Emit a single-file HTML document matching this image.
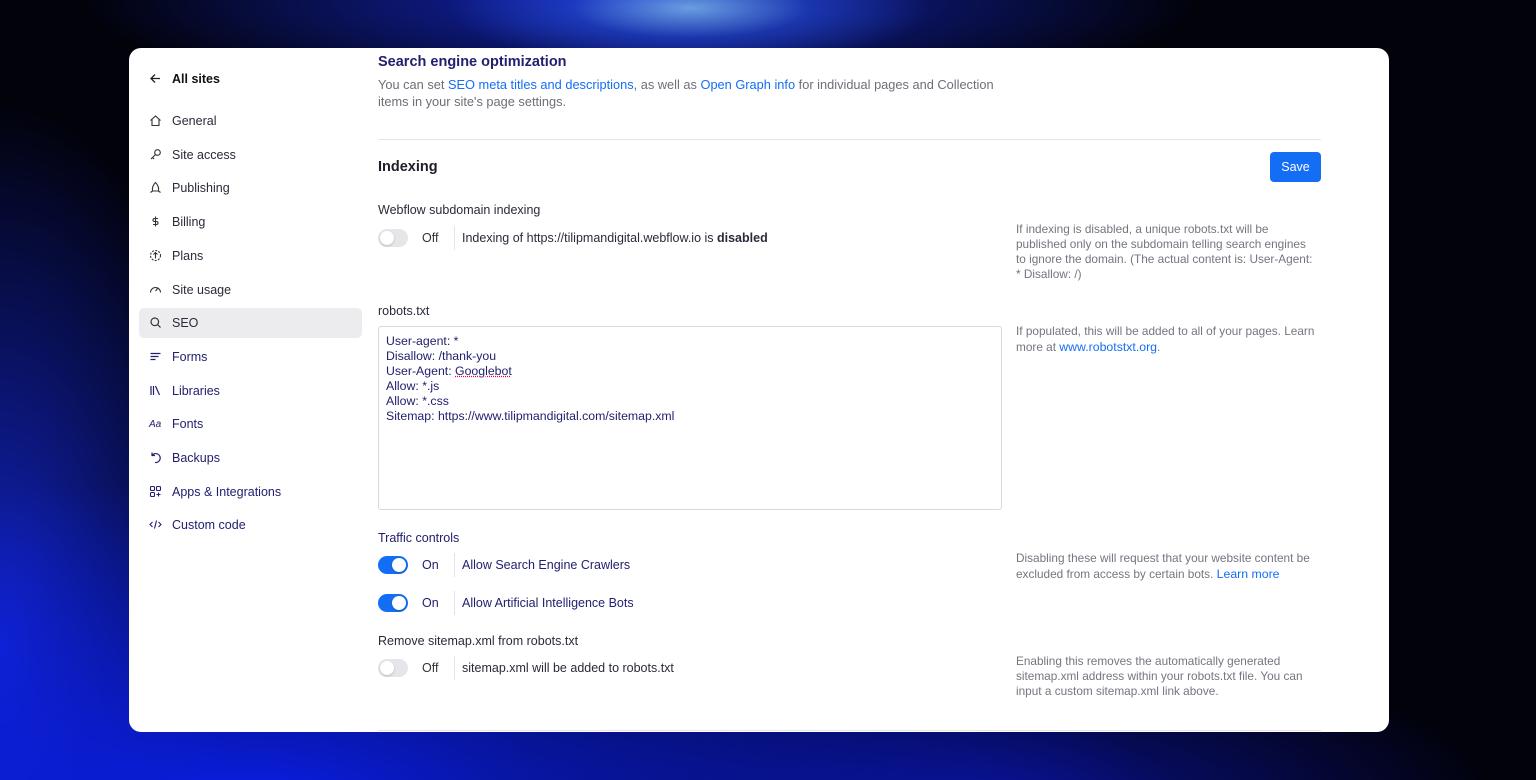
<!DOCTYPE html>
<html><head><meta charset="utf-8"><style>
*{margin:0;padding:0;box-sizing:border-box}
body{width:1536px;height:780px;overflow:hidden;font-family:"Liberation Sans",sans-serif;
background:
radial-gradient(ellipse 240px 60px at 690px 8px,rgba(120,180,235,.85),rgba(40,80,220,.5) 50%,transparent 100%),
radial-gradient(ellipse 560px 110px at 640px 0px,rgba(20,40,200,.9),transparent 100%),
radial-gradient(ellipse 900px 320px at 250px 800px,rgba(10,30,230,1),transparent 100%),
radial-gradient(ellipse 500px 160px at 1000px 800px,rgba(10,20,170,.8),transparent 100%),
radial-gradient(ellipse 250px 550px at 0px 650px,rgba(20,40,220,.9),transparent 100%),
#02020a;position:relative}
.card{position:absolute;left:129px;top:48px;width:1260px;height:684px;background:#fff;border-radius:12px;overflow:hidden}
.a{position:absolute;white-space:nowrap}
.nav{position:absolute;left:20px;font-size:12.5px;color:#2a2a3a;line-height:16px;white-space:nowrap;width:200px}
.nav svg{position:absolute;left:0;top:1px}
.nav span{position:absolute;left:23px;top:0}
.navy{color:#22206e}
.tg{position:absolute;width:30px;height:18px;border-radius:9px;background:#e6e6ea}
.tg::after{content:"";position:absolute;top:2px;left:2px;width:14px;height:14px;border-radius:50%;background:#fff;box-shadow:0 1px 2px rgba(0,0,0,.2)}
.tg.on{background:#146ef5}.tg.on::after{left:14px}
.dv{position:absolute;width:1px;height:24px;background:#e4e4e8}
.r{position:absolute;left:887px;font-size:11.8px;color:#757580;line-height:15px;width:302px}
.lk{color:#146ef5}
</style></head><body>
<div class="card">
<div class="nav" style="top:23px;font-weight:bold;color:#111"><svg width="13" height="13" viewBox="0 0 13 13" fill="none" stroke="#222" stroke-width="1.3"><path d="M11 6.5H2M6 2.5l-4 4 4 4"/></svg><span>All sites</span></div>
<div class="nav" style="top:65px"><svg width="13" height="13" viewBox="0 0 13 13" fill="none" stroke="#333" stroke-width="1.1"><path d="M1.5 6.5L6.5 2l5 4.5M3 5.5v6h7v-6"/></svg><span>General</span></div>
<div class="nav" style="top:99px"><svg width="13" height="13" viewBox="0 0 13 13" fill="none" stroke="#333" stroke-width="1.1"><circle cx="8.5" cy="4.5" r="2.8"/><path d="M6.5 6.5L2 11M3.5 9.5l1.5 1.5"/></svg><span>Site access</span></div>
<div class="nav" style="top:132px"><svg width="13" height="13" viewBox="0 0 13 13" fill="none" stroke="#333" stroke-width="1.1"><path d="M6.5 1.5C4 4 3 7 3.5 10h6C10 7 9 4 6.5 1.5zM3.5 10L1.5 11.5M9.5 10l2 1.5"/></svg><span>Publishing</span></div>
<div class="nav" style="top:166px"><svg width="13" height="13" viewBox="0 0 13 13" fill="none" stroke="#333" stroke-width="1.1"><path d="M9 3.5H5.5a1.5 1.5 0 000 3h2a1.5 1.5 0 010 3H4M6.5 1.5v10"/></svg><span>Billing</span></div>
<div class="nav" style="top:200px"><svg width="13" height="13" viewBox="0 0 13 13" fill="none" stroke="#333" stroke-width="1.1"><circle cx="6.5" cy="6.5" r="5" stroke-dasharray="2 1.3"/><path d="M6.5 9.5v-6M4.5 5.5l2-2 2 2"/></svg><span>Plans</span></div>
<div class="nav" style="top:234px"><svg width="13" height="13" viewBox="0 0 13 13" fill="none" stroke="#333" stroke-width="1.1"><path d="M1.5 9.5a5 5 0 0110 0M6.5 8l2.5-3"/></svg><span>Site usage</span></div>
<div style="position:absolute;left:10px;top:260px;width:223px;height:30px;background:#ececef;border-radius:5px"></div>
<div class="nav" style="top:267px"><svg width="13" height="13" viewBox="0 0 13 13" fill="none" stroke="#333" stroke-width="1.2"><circle cx="5.8" cy="5.8" r="3.8"/><path d="M8.5 8.5l3 3"/></svg><span>SEO</span></div>
<div class="nav navy" style="top:301px"><svg width="13" height="13" viewBox="0 0 13 13" fill="none" stroke="#22206e" stroke-width="1.2"><path d="M1.5 3.5h10M1.5 6.5h8M1.5 9.5h5"/></svg><span>Forms</span></div>
<div class="nav navy" style="top:335px"><svg width="13" height="13" viewBox="0 0 13 13" fill="none" stroke="#22206e" stroke-width="1.2"><path d="M2 2v9M4.5 2v9M6.5 2l4 9"/></svg><span>Libraries</span></div>
<div class="nav navy" style="top:368px"><span style="left:0;font-size:10px;font-style:italic;top:1px">Aa</span><span>Fonts</span></div>
<div class="nav navy" style="top:402px"><svg width="13" height="13" viewBox="0 0 13 13" fill="none" stroke="#22206e" stroke-width="1.2"><path d="M3 4.5a4.5 4.5 0 113 7M3 1.5v3h3"/></svg><span>Backups</span></div>
<div class="nav navy" style="top:436px"><svg width="13" height="13" viewBox="0 0 13 13" fill="none" stroke="#22206e" stroke-width="1.1"><rect x="1.5" y="1.5" width="4" height="4" rx="1"/><rect x="1.5" y="7.5" width="4" height="4" rx="1"/><rect x="7.5" y="1.5" width="4" height="4" rx="1"/><path d="M9.5 7.5v4M7.5 9.5h4"/></svg><span>Apps &amp; Integrations</span></div>
<div class="nav navy" style="top:469px"><svg width="13" height="13" viewBox="0 0 13 13" fill="none" stroke="#22206e" stroke-width="1.1"><path d="M3.5 4L1 6.5 3.5 9M9.5 4L12 6.5 9.5 9M7.5 2.5l-2 8"/></svg><span>Custom code</span></div>

<div class="a" style="left:249px;top:6px;font-size:14.5px;font-weight:bold;color:#22206e">Search engine optimization</div>
<div class="a" style="left:249px;top:29px;font-size:12.8px;color:#6e6e78;line-height:16.5px">You can set <span class="lk">SEO meta titles and descriptions</span>, as well as <span class="lk">Open Graph info</span> for individual pages and Collection<br>items in your site's page settings.</div>
<div style="position:absolute;left:249px;top:91px;width:943px;height:1px;background:#e6e6ea"></div>
<div class="a" style="left:249px;top:111px;font-size:14.5px;font-weight:bold;color:#1e1e28">Indexing</div>
<div style="position:absolute;left:1141px;top:104px;width:51px;height:30px;background:#146ef5;border-radius:4px;color:#fff;font-size:12.5px;text-align:center;line-height:30px">Save</div>

<div class="a" style="left:249px;top:155px;font-size:12.5px;color:#2a2a3a">Webflow subdomain indexing</div>
<div class="tg" style="left:249px;top:181px"></div>
<div class="a" style="left:293px;top:183px;font-size:12.5px;color:#333">Off</div>
<div class="dv" style="left:325px;top:178px"></div>
<div class="a" style="left:333px;top:183px;font-size:12.5px;color:#2a2a3a">Indexing of https://tilipmandigital.webflow.io is <b>disabled</b></div>
<div class="r" style="top:174px">If indexing is disabled, a unique robots.txt will be published only on the subdomain telling search engines to ignore the domain. (The actual content is: User-Agent: * Disallow: /)</div>

<div class="a" style="left:249px;top:256px;font-size:12.5px;color:#2a2a3a">robots.txt</div>
<div style="position:absolute;left:249px;top:278px;width:624px;height:184px;border:1px solid #d8d8de;border-radius:3px"></div>
<div class="a" style="left:257px;top:286px;font-size:12.3px;color:#22206e;line-height:15px">User-agent: *<br>Disallow: /thank-you<br>User-Agent: <span style="text-decoration:underline dotted #e03;">Googlebot</span><br>Allow: *.js<br>Allow: *.css<br>Sitemap: https://www.tilipmandigital.com/sitemap.xml</div>
<div class="r" style="top:275px;line-height:16px">If populated, this will be added to all of your pages. Learn more at <span class="lk" style="font-size:12.3px">www.robotstxt.org</span>.</div>

<div class="a" style="left:249px;top:483px;font-size:12.5px;color:#22206e">Traffic controls</div>
<div class="tg on" style="left:249px;top:508px"></div>
<div class="a" style="left:293px;top:510px;font-size:12.5px;color:#22206e">On</div>
<div class="dv" style="left:325px;top:505px"></div>
<div class="a" style="left:333px;top:510px;font-size:12.5px;color:#22206e">Allow Search Engine Crawlers</div>
<div class="tg on" style="left:249px;top:546px"></div>
<div class="a" style="left:293px;top:548px;font-size:12.5px;color:#22206e">On</div>
<div class="dv" style="left:325px;top:543px"></div>
<div class="a" style="left:333px;top:548px;font-size:12.5px;color:#22206e">Allow Artificial Intelligence Bots</div>
<div class="r" style="top:502px;line-height:16px">Disabling these will request that your website content be excluded from access by certain bots. <span class="lk" style="font-size:12.3px">Learn more</span></div>

<div class="a" style="left:249px;top:586px;font-size:12.5px;color:#2a2a3a">Remove sitemap.xml from robots.txt</div>
<div class="tg" style="left:249px;top:611px"></div>
<div class="a" style="left:293px;top:613px;font-size:12.5px;color:#333">Off</div>
<div class="dv" style="left:325px;top:608px"></div>
<div class="a" style="left:333px;top:613px;font-size:12.5px;color:#2a2a3a">sitemap.xml will be added to robots.txt</div>
<div class="r" style="top:606px">Enabling this removes the automatically generated sitemap.xml address within your robots.txt file. You can input a custom sitemap.xml link above.</div>
<div style="position:absolute;left:249px;top:682px;width:943px;height:1px;background:#e6e6ea"></div>
</div>
</body></html>
